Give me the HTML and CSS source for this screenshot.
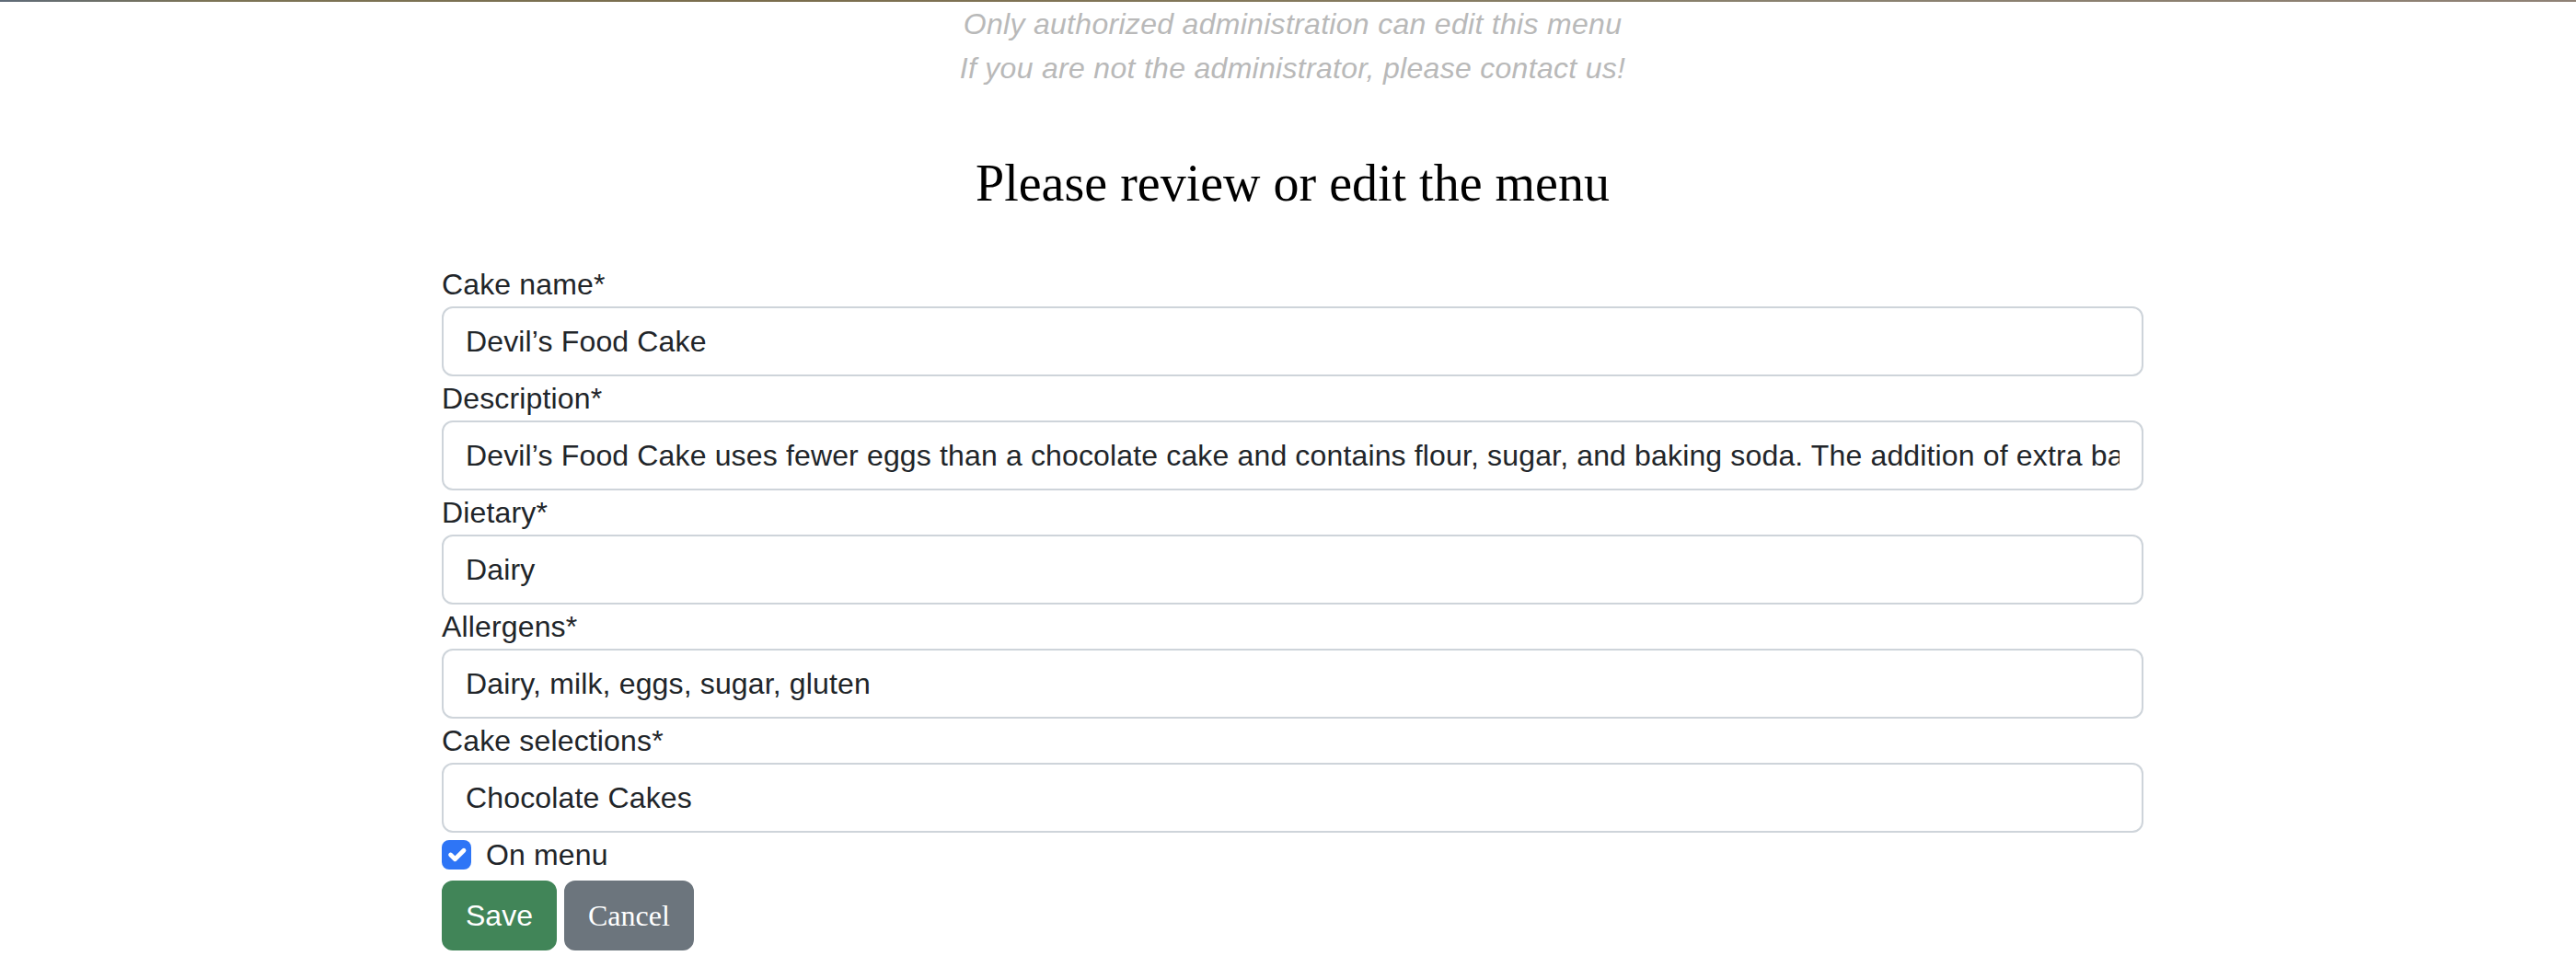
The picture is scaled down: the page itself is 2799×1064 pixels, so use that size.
FILE: index.html
```html
<!DOCTYPE html>
<html lang="en">
<head>
<meta charset="utf-8">
<title>Edit menu</title>
<link rel="stylesheet" href="styles.css">
</head>
<body>
<div class="topbar"></div>
<main class="form-wrap">
  <div class="notice">
    <p>Only authorized administration can edit this menu</p>
    <p>If you are not the administrator, please contact us!</p>
  </div>
  <h3 class="title">Please review or edit the menu</h3>
  <form class="menu-form">
    <label class="field-label" for="name">Cake name*</label>
    <input class="field" id="name" type="text" value="Devil’s Food Cake">
    <label class="field-label" for="desc">Description*</label>
    <input class="field" id="desc" type="text" value="Devil’s Food Cake uses fewer eggs than a chocolate cake and contains flour, sugar, and baking soda. The addition of extra baking soda gives the cake its deep mahogany colour.">
    <label class="field-label" for="diet">Dietary*</label>
    <input class="field" id="diet" type="text" value="Dairy">
    <label class="field-label" for="allergens">Allergens*</label>
    <input class="field" id="allergens" type="text" value="Dairy, milk, eggs, sugar, gluten">
    <label class="field-label" for="sel">Cake selections*</label>
    <input class="field" id="sel" type="text" value="Chocolate Cakes">
    <div class="check-row">
      <span class="check-box"><svg viewBox="0 0 20 20" width="32" height="32"><path d="M6 10l3 3l6-6" fill="none" stroke="#fff" stroke-width="3" stroke-linecap="round" stroke-linejoin="round"/></svg></span>
      <span class="check-label">On menu</span>
    </div>
    <div class="actions">
      <button type="button" class="btn btn-save">Save</button>
      <button type="button" class="btn btn-cancel">Cancel</button>
    </div>
  </form>
</main>
</body>
</html>
```
FILE: styles.css
```css
html, body {
  margin: 0;
  padding: 0;
  background: #fff;
}
body {
  font-family: "Liberation Sans", Arial, sans-serif;
  font-size: 32px;
  line-height: 48px;
  color: #212529;
  letter-spacing: 0.15px;
}
.topbar {
  height: 2px;
  background: linear-gradient(90deg, #5f6b78 0%, #7c7456 8%, #7a6d4d 30%, #84795c 50%, #8a8270 70%, #8c8070 85%, #8f8276 100%);
}
.notice p {
  margin: 0;
  text-align: center;
  font-style: italic;
  color: #b9b9b9;
  letter-spacing: 0.3px;
}
.form-wrap {
  margin-left: 480px;
  width: 1849px;
}
.title {
  margin: 68px 0 52px;
  text-align: center;
  font-family: "Liberation Serif", "Times New Roman", serif;
  font-weight: normal;
  font-size: 56px;
  line-height: 67px;
  color: #000;
  letter-spacing: 0;
}
.menu-form {
  display: flex;
  flex-direction: column;
}
.field-label {
  display: block;
}
.field {
  display: block;
  width: 100%;
  box-sizing: border-box;
  height: 76px;
  margin: 0;
  padding: 12px 24px;
  font-family: "Liberation Sans", Arial, sans-serif;
  font-size: 32px;
  line-height: 48px;
  letter-spacing: 0.15px;
  color: #212529;
  background: #fff;
  border: 2px solid #ced4da;
  border-radius: 12px;
  outline: none;
}
.check-row {
  display: flex;
  align-items: flex-start;
  min-height: 48px;
  margin-bottom: 4px;
}
.check-box {
  width: 32px;
  height: 32px;
  margin-top: 8px;
  border-radius: 8px;
  background: #2e75f6;
  display: flex;
  align-items: center;
  justify-content: center;
  flex: none;
}
.check-box svg {
  display: block;
}
.check-label {
  margin-left: 16px;
}
.actions {
  display: flex;
  gap: 8px;
}
.btn {
  display: inline-block;
  margin: 0;
  padding: 12px 24px;
  font-size: 32px;
  line-height: 48px;
  color: #fff;
  border: 2px solid transparent;
  border-radius: 12px;
  cursor: pointer;
  letter-spacing: 0;
}
.btn-save {
  font-family: "Liberation Sans", Arial, sans-serif;
  background: #418558;
  border-color: #418558;
}
.btn-cancel {
  font-family: "Liberation Serif", "Times New Roman", serif;
  background: #6c757d;
  border-color: #6c757d;
}
```
